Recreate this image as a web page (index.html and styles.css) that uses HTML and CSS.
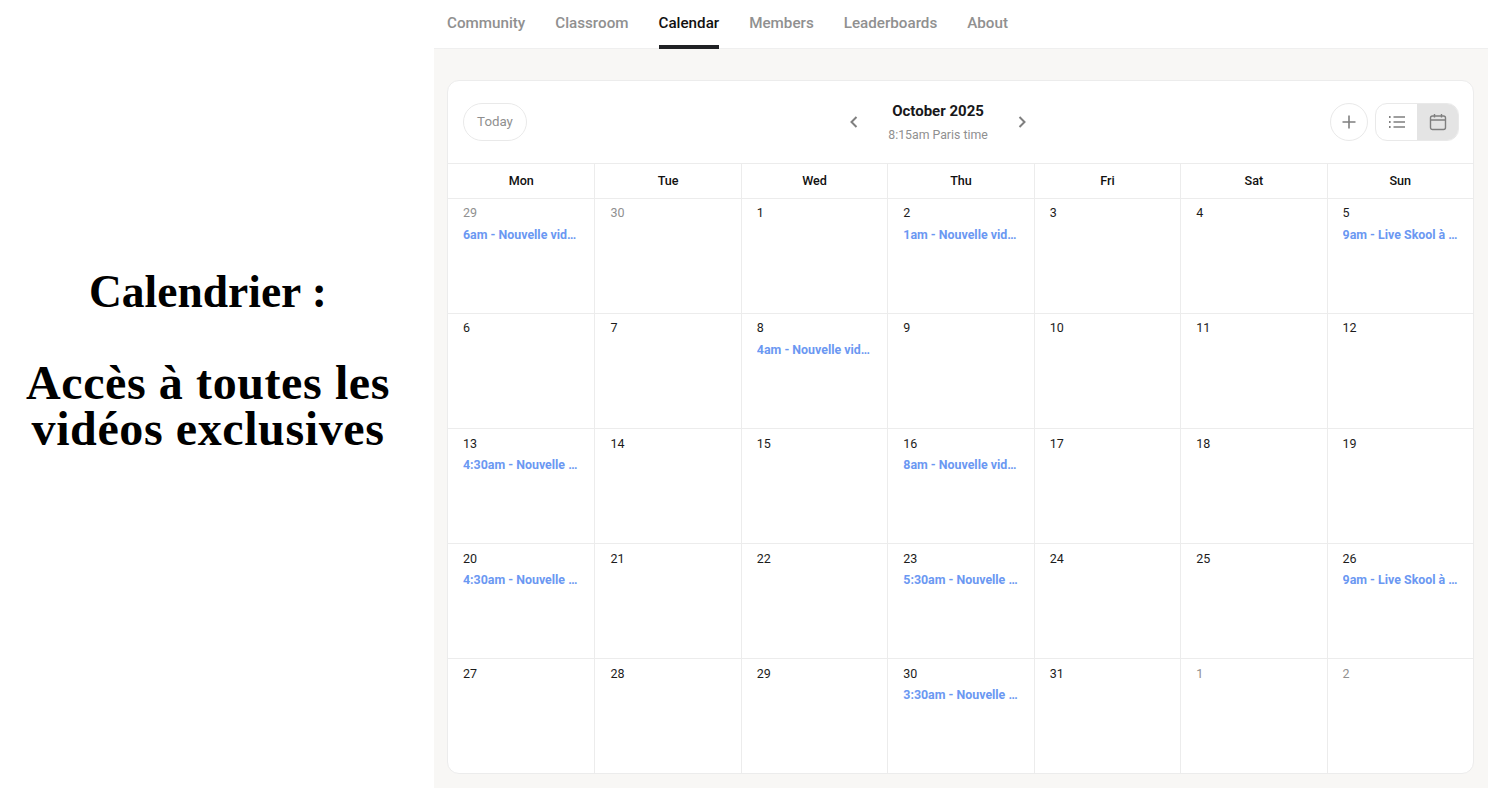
FILE: index.html
```html
<!DOCTYPE html>
<html lang="en">
<head>
<meta charset="utf-8">
<title>Calendar</title>
<link rel="stylesheet" href="styles.css">
</head>
<body>
<div class="page">
  <aside class="intro">
    <h1 class="intro-title first">Calendrier :</h1>
    <h1 class="intro-title">Accès à toutes les vidéos exclusives</h1>
  </aside>
  <main class="app">
    <nav class="tabs">
      <a class="tab">Community</a>
      <a class="tab">Classroom</a>
      <a class="tab active">Calendar</a>
      <a class="tab">Members</a>
      <a class="tab">Leaderboards</a>
      <a class="tab">About</a>
    </nav>
    <section class="content">
      <div class="card">
        <header class="toolbar">
          <div class="toolbar-side"><button class="today">Today</button></div>
          <div class="month-nav">
            <svg class="chev" viewBox="0 0 10 14"><path d="M7.5 2 2.5 7l5 5"/></svg>
            <div class="month">
              <div class="month-name">October 2025</div>
              <div class="month-time">8:15am Paris time</div>
            </div>
            <svg class="chev" viewBox="0 0 10 14"><path d="M2.5 2l5 5-5 5"/></svg>
          </div>
          <div class="toolbar-side right">
            <button class="add"><svg viewBox="0 0 16 16"><path d="M8 1.5v13M1.5 8h13"/></svg></button>
            <div class="toggle">
              <span class="toggle-item"><svg viewBox="0 0 18 14"><path d="M5.5 2H17M5.5 7H17M5.5 12H17"/><path class="dots" d="M1 2h1.6M1 7h1.6M1 12h1.6"/></svg></span>
              <span class="toggle-item on"><svg viewBox="0 0 18 18"><rect x="1.5" y="3" width="15" height="13.5" rx="2"/><path d="M1.5 7h15M5.5 1v3.5M12.5 1v3.5"/></svg></span>
            </div>
          </div>
        </header>
        <div class="grid">
          <div class="dow">Mon</div><div class="dow">Tue</div><div class="dow">Wed</div><div class="dow">Thu</div><div class="dow">Fri</div><div class="dow">Sat</div><div class="dow">Sun</div>

          <div class="day muted"><span class="num">29</span><span class="event">6am - Nouvelle vidéo exclusive</span></div>
          <div class="day muted"><span class="num">30</span></div>
          <div class="day"><span class="num">1</span></div>
          <div class="day"><span class="num">2</span><span class="event">1am - Nouvelle vidéo exclusive</span></div>
          <div class="day"><span class="num">3</span></div>
          <div class="day"><span class="num">4</span></div>
          <div class="day"><span class="num">5</span><span class="event">9am - Live Skool à la maison</span></div>

          <div class="day"><span class="num">6</span></div>
          <div class="day"><span class="num">7</span></div>
          <div class="day"><span class="num">8</span><span class="event">4am - Nouvelle vidéo exclusive</span></div>
          <div class="day"><span class="num">9</span></div>
          <div class="day"><span class="num">10</span></div>
          <div class="day"><span class="num">11</span></div>
          <div class="day"><span class="num">12</span></div>

          <div class="day"><span class="num">13</span><span class="event">4:30am - Nouvelle vidéo exclusive</span></div>
          <div class="day"><span class="num">14</span></div>
          <div class="day"><span class="num">15</span></div>
          <div class="day"><span class="num">16</span><span class="event">8am - Nouvelle vidéo exclusive</span></div>
          <div class="day"><span class="num">17</span></div>
          <div class="day"><span class="num">18</span></div>
          <div class="day"><span class="num">19</span></div>

          <div class="day"><span class="num">20</span><span class="event">4:30am - Nouvelle vidéo exclusive</span></div>
          <div class="day"><span class="num">21</span></div>
          <div class="day"><span class="num">22</span></div>
          <div class="day"><span class="num">23</span><span class="event">5:30am - Nouvelle vidéo exclusive</span></div>
          <div class="day"><span class="num">24</span></div>
          <div class="day"><span class="num">25</span></div>
          <div class="day"><span class="num">26</span><span class="event">9am - Live Skool à la maison</span></div>

          <div class="day"><span class="num">27</span></div>
          <div class="day"><span class="num">28</span></div>
          <div class="day"><span class="num">29</span></div>
          <div class="day"><span class="num">30</span><span class="event">3:30am - Nouvelle vidéo exclusive</span></div>
          <div class="day"><span class="num">31</span></div>
          <div class="day muted"><span class="num">1</span></div>
          <div class="day muted"><span class="num">2</span></div>
        </div>
      </div>
    </section>
  </main>
</div>
</body>
</html>
```
FILE: styles.css
```css
* { box-sizing: border-box; }
html, body { margin: 0; padding: 0; background: #fff; }
body { width: 1500px; height: 800px; overflow: hidden; font-family: Roboto, "Liberation Sans", sans-serif; color: #111; }
.page { display: flex; width: 1488px; height: 788px; }
.intro { width: 434px; flex: none; display: flex; flex-direction: column; justify-content: center; padding: 0 18px 68px 0; gap: 45px; }
.intro-title { margin: 0; font: bold 48px/46px "Liberation Serif", serif; letter-spacing: 0.6px; text-align: center; color: #000; }
.intro-title.first { font-size: 45.5px; letter-spacing: 0; }
.app { flex: 1; display: flex; flex-direction: column; background: #f8f7f5; min-width: 0; }
.tabs { height: 49px; flex: none; display: flex; gap: 30px; padding-left: 13px; background: #fff; border-bottom: 1px solid #efefef; }
.tab { height: 49px; font-size: 15.2px; font-weight: 500; line-height: 46px; color: #909090; border-bottom: 4px solid transparent; }
.tab.active { color: #111; border-bottom-color: #202124; }
.content { flex: 1; padding: 31px 14px 14px 13px; min-height: 0; }
.card { height: 694px; display: flex; flex-direction: column; background: #fff; border: 1px solid #ececec; border-radius: 12px; overflow: hidden; }
.toolbar { height: 82px; flex: none; display: flex; align-items: center; justify-content: space-between; padding: 0 14px 0 15px; }
.toolbar-side { width: 200px; display: flex; align-items: center; }
.toolbar-side.right { justify-content: flex-end; gap: 7px; }
.today { width: 64px; height: 38px; padding: 0 0 1px; background: #fff; border: 1px solid #e9e9e9; border-radius: 19px; font: 13.3px Roboto, sans-serif; color: #8f8f8f; }
.month-nav { display: flex; align-items: center; gap: 16px; margin-right: 46px; }
.chev { width: 10px; height: 14px; fill: none; stroke: #7f7f7f; stroke-width: 2; }
.month { width: 126px; text-align: center; }
.month-name { font-size: 15px; font-weight: 700; line-height: 20px; color: #18181a; }
.month-time { margin-top: 5px; font-size: 12.3px; line-height: 18px; color: #8f8f8f; }
.add { width: 38px; height: 38px; padding: 0; display: flex; align-items: center; justify-content: center; background: #fff; border: 1px solid #e9e9e9; border-radius: 50%; }
.add svg { width: 16px; height: 16px; fill: none; stroke: #7f7f7f; stroke-width: 1.6; }
.toggle { display: flex; width: 84px; height: 38px; border: 1px solid #e9e9e9; border-radius: 12px; overflow: hidden; }
.toggle-item { flex: 1; display: flex; align-items: center; justify-content: center; }
.toggle-item svg { width: 18px; height: 18px; fill: none; stroke: #7f7f7f; stroke-width: 1.4; }
.toggle-item .dots { stroke-width: 1.8; }
.toggle-item.on { background: #e4e4e4; }
.grid { flex: 1; display: grid; grid-template-columns: repeat(7, 1fr); grid-template-rows: 35px repeat(5, 115.1px); min-height: 0; }
.dow { display: flex; align-items: center; justify-content: center; padding-bottom: 2px; font-size: 12.6px; font-weight: 500; color: #111; border-top: 1px solid #ececec; border-left: 1px solid #ececec; }
.day { display: flex; flex-direction: column; padding: 5.4px 15px 0; min-width: 0; border-top: 1px solid #ececec; border-left: 1px solid #ececec; }
.dow:nth-child(7n+1), .day:nth-child(7n+1) { border-left: 0; }
.num { font-size: 12.5px; line-height: 18px; color: #1c1c1c; }
.muted .num { color: #909090; }
.event { margin-top: 3.7px; font-size: 12.4px; font-weight: 700; line-height: 17px; color: #6b98f2; white-space: nowrap; overflow: hidden; text-overflow: ellipsis; }
```
